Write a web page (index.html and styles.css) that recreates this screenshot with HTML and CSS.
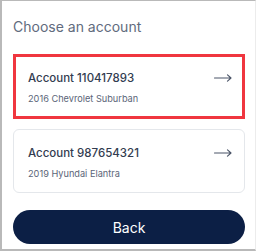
FILE: index.html
```html
<!DOCTYPE html>
<html lang="en">
<head>
  <meta name="viewport" content="width=device-width, initial-scale=1">
  <link rel="stylesheet" href="styles.css">
</head>
<body>
  <section class="frame">
    <h1 class="title">Choose an account</h1>

    <div class="account-list">
      <div class="account-card selected">
        <div class="account-row">
          <span class="account-name">Account 110417893</span>
          <svg class="arrow" width="18" height="8" viewBox="0 0 18 8">
            <path d="M0.5 4 H17 M13.5 0.8 L17 4 L13.5 7.2" fill="none" stroke="#4b5568" stroke-width="1.1" stroke-linecap="round" stroke-linejoin="round"/>
          </svg>
        </div>
        <div class="account-car">2016 Chevrolet Suburban</div>
      </div>

      <div class="account-card">
        <div class="account-row">
          <span class="account-name">Account 987654321</span>
          <svg class="arrow" width="18" height="8" viewBox="0 0 18 8">
            <path d="M0.5 4 H17 M13.5 0.8 L17 4 L13.5 7.2" fill="none" stroke="#4b5568" stroke-width="1.1" stroke-linecap="round" stroke-linejoin="round"/>
          </svg>
        </div>
        <div class="account-car">2019 Hyundai Elantra</div>
      </div>
    </div>

    <button class="back-btn">Back</button>
  </section>
</body>
</html>
```

FILE: styles.css
```css
/* ******************** global ******************* */

* {
  box-sizing: border-box;
}

html,
body {
  margin: 0;
  padding: 0;
  background-color: white;
  font-family: "Inter", "Noto Sans", sans-serif;
}

.frame {
  display: flex;
  flex-direction: column;
  width: 256px;
  height: 251px;
  padding: 0 10px 0 11px;
  border-top: 1px solid #b9b9b9;
  border-left: 2px solid #b9b9b9;
  border-bottom: 2px solid #b9b9b9;
  border-right: 1px solid #ececec;
}

/* ******************** title ******************* */

.title {
  margin: 17px 0 0 0;
  font-size: 14px;
  font-weight: 400;
  line-height: 17px;
  color: #616b7d;
}

/* ******************** accounts ******************* */

.account-list {
  display: flex;
  flex-direction: column;
  gap: 10px;
  margin-top: 19px;
}

.account-card {
  height: 64px;
  padding: 14px 12px 0 14px;
  border: 1px solid #e4e7eb;
  border-radius: 6px;
}

.account-card.selected {
  height: 65px;
  padding: 12px 10px 0 12px;
  border: 3px solid #f0363f;
  border-radius: 0;
}

.account-row {
  display: flex;
  justify-content: space-between;
  align-items: center;
  height: 18px;
}

.account-name {
  font-size: 11.5px;
  font-weight: 500;
  color: #323c50;
}

.account-car {
  margin-top: 6px;
  font-size: 9.2px;
  color: #5b6578;
}

/* ******************** back ******************* */

.back-btn {
  margin-top: 17px;
  height: 34px;
  width: 100%;
  border: none;
  border-radius: 17px;
  background-color: #0c1f45;
  color: white;
  font-family: inherit;
  font-size: 14px;
}
```
